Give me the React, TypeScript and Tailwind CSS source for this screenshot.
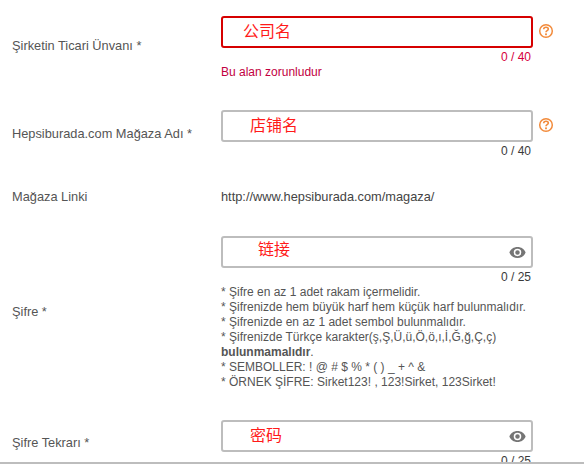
const font = { fontFamily: '"Liberation Sans", "Noto Sans CJK SC", sans-serif' };

function Help() {
  return (
    <svg width="16" height="16" viewBox="0 0 16 16" className="shrink-0 ml-[5px] mt-[7px]" fill="none">
      <circle cx="8" cy="8" r="6.3" stroke="#f28b3c" strokeWidth="1.5" />
      <path d="M5.700 6.300c0-1.300 1-2.100 2.300-2.100s2.300.8 2.300 1.900c0 1.700-2.300 1.500-2.300 3.200" stroke="#f28b3c" strokeWidth="1.600" />
      <rect x="7.100" y="10.400" width="1.800" height="1.800" fill="#f28b3c" />
    </svg>
  );
}

function Eye() {
  return (
    <svg width="17" height="11" viewBox="0 0 18 12" preserveAspectRatio="none" className="absolute right-[5px] top-[9px]">
      <path fillRule="evenodd" fill="#757575" d="M9 0C5 0 1.800 2.400.4 6 1.800 9.600 5 12 9 12s7.200-2.400 8.600-6C16.200 2.400 13 0 9 0zm0 10a4 4 0 1 1 0-8 4 4 0 0 1 0 8zm0-6.400a2.400 2.400 0 1 0 0 4.800 2.400 2.400 0 0 0 0-4.800z" />
    </svg>
  );
}

function Field({ value, pad, error, eye, help, count, raised }: { value: string; pad: string; error?: boolean; eye?: boolean; help?: boolean; count: string; raised?: boolean }) {
  return (
    <div>
      <div className="flex items-start">
        <div className={`relative w-[312px] h-[32px] rounded-[3px] bg-white border-2 ${error ? "border-[#d60000]" : "border-[#bdbdbd]"}`}>
          <span className={`absolute ${pad} ${raised ? "top-[0px]" : "top-[2px]"} text-[16px] leading-[24px] text-[#ff1a1a]`}>{value}</span>
          {eye && <Eye />}
        </div>
        {help && <Help />}
      </div>
      <div className={`w-[310px] h-[16px] pt-[1px] text-right text-[12px] leading-[16px] ${error ? "text-[#d6003c]" : "text-[#3a3a3a]"}`}>{count}</div>
    </div>
  );
}

export default function App() {
  return (
    <div style={font} className="w-[584px] h-[464px] bg-white overflow-hidden">
      <div className="h-[462px] overflow-hidden text-[12.8px] leading-[15px] text-[#555555]">
        <div className="grid grid-cols-[221px_1fr] pt-[16px]">
          <div className="pl-[12px] self-start pt-[22px]">Şirketin Ticari Ünvanı *</div>
          <div className="h-[94px]">
            <Field value="公司名" pad="left-[20px]" error help count="0 / 40" />
            <div className="mt-[1px] text-[12px] leading-[15px] text-[#c2003f]">Bu alan zorunludur</div>
          </div>

          <div className="pl-[12px] pt-[16px]">Hepsiburada.com Mağaza Adı *</div>
          <div className="h-[79px]">
            <Field value="店铺名" pad="left-[27px]" help count="0 / 40" />
          </div>

          <div className="pl-[12px]">Mağaza Linki</div>
          <div className="h-[47px] text-[#444444]">http://www.hepsiburada.com/magaza/</div>

          <div className="pl-[12px] pt-[68px]">Şifre *</div>
          <div className="h-[184px]">
            <Field value="链接" pad="left-[35px]" eye raised count="0 / 25" />
            <div className="mt-[1px] text-[12px] leading-[15px] text-[#555555]">
              <div>* Şifre en az 1 adet rakam içermelidir.</div>
              <div>* Şifrenizde hem büyük harf hem küçük harf bulunmalıdır.</div>
              <div>* Şifrenizde en az 1 adet sembol bulunmalıdır.</div>
              <div>* Şifrenizde Türkçe karakter(ş,Ş,Ü,ü,Ö,ö,ı,İ,Ğ,ğ,Ç,ç)</div>
              <div><b className="font-bold">bulunmamalıdır</b>.</div>
              <div>* SEMBOLLER: ! @ # $ % * ( ) _ + ^ &amp;</div>
              <div>* ÖRNEK ŞİFRE: Sirket123! , 123!Sirket, 123Sirket!</div>
            </div>
          </div>

          <div className="pl-[12px] pt-[15px]">Şifre Tekrarı *</div>
          <div>
            <Field value="密码" pad="left-[27px]" eye count="0 / 25" />
          </div>
        </div>
      </div>
      <div className="h-[2px] bg-[#bdbdbd]" />
    </div>
  );
}
